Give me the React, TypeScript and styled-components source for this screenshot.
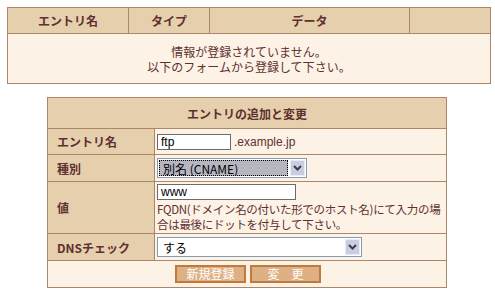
import styled, { createGlobalStyle } from "styled-components";

const GlobalStyle = createGlobalStyle`
  body {
    margin: 0;
    background: #ffffff;
    font-family: "Noto Sans CJK JP", "Liberation Sans", sans-serif;
    font-size: 12px;
    color: #5e3030;
  }
`;

const Page = styled.div`
  padding: 7px;
`;

const ListTable = styled.table`
  width: 480px;
  border-collapse: collapse;
  table-layout: fixed;
`;

const HeadCell = styled.th<{ $w: number }>`
  width: ${(p) => p.$w}px;
  height: 25px;
  padding: 0;
  background: #e6cfad;
  border: 1px solid #ad8568;
  font-weight: bold;
  font-size: 12px;
  color: #5e3030;
`;

const EmptyCell = styled.td`
  height: 49px;
  padding: 0;
  background: #fdf2e6;
  border: 1px solid #ad8568;
  text-align: center;
  line-height: 15px;
`;

const FormTable = styled.table`
  width: 400px;
  margin: 13px 0 0 40px;
  border-collapse: collapse;
  table-layout: fixed;
`;

const Col = styled.col<{ $w?: number }>`
  width: ${(p) => (p.$w ? `${p.$w}px` : "auto")};
`;

const Title = styled.th`
  height: 30px;
  padding: 0;
  background: #e6cfad;
  border: 1px solid #ad8568;
  font-weight: bold;
  text-align: center;
`;

const Label = styled.th<{ $h: number }>`
  height: ${(p) => p.$h}px;
  padding: 0 0 0 9px;
  background: #e6cfad;
  border: 1px solid #ad8568;
  font-weight: bold;
  text-align: left;
`;

const Value = styled.td`
  padding: 0 0 0 2px;
  background: #fdf2e6;
  border: 1px solid #ad8568;
`;

const Line = styled.div`
  display: flex;
  align-items: center;
  gap: 3px;
`;

const Field = styled.div<{ $w: number }>`
  box-sizing: border-box;
  width: ${(p) => p.$w}px;
  height: 16px;
  padding: 0 3px;
  background: #ffffff;
  border: 1px solid #6b6b6b;
  color: #000000;
  font-family: "Liberation Sans", sans-serif;
  font-size: 12px;
  line-height: 14px;
`;

const Domain = styled.span`
  font-family: "Liberation Sans", sans-serif;
  color: #5e3030;
`;

const SelectBox = styled.div<{ $w: number }>`
  box-sizing: border-box;
  width: ${(p) => p.$w}px;
  height: 20px;
  display: flex;
  align-items: center;
  padding: 1px;
  background: #ffffff;
  border: 1px solid #7f9db9;
  color: #000000;
`;

const SelectText = styled.div<{ $focus?: boolean }>`
  flex: 1;
  height: 16px;
  box-sizing: border-box;
  padding: 0 3px;
  line-height: 15px;
  background: ${(p) => (p.$focus ? "#b5b6c0" : "transparent")};
  border: 1px dotted ${(p) => (p.$focus ? "#000000" : "transparent")};
`;

const ArrowButton = styled.div`
  width: 15px;
  height: 16px;
  margin-left: 2px;
  box-sizing: border-box;
  display: flex;
  align-items: center;
  justify-content: center;
  background: #c9cde2;
  border: 1px solid #e8eaf4;
`;

const Hint = styled.div`
  margin-top: 2px;
  line-height: 15px;
  font-size: 11.5px;
  letter-spacing: -0.3px;
  white-space: nowrap;
`;

const ButtonCell = styled.td`
  height: 26px;
  padding: 0;
  background: #fdf2e6;
  border: 1px solid #ad8568;
  text-align: center;
`;

const Buttons = styled.div`
  display: flex;
  justify-content: center;
  gap: 4px;
  padding-left: 2px;
`;

const Button = styled.button`
  width: 71px;
  height: 18px;
  padding: 0;
  background: #deb184;
  border: 2px solid #c27a3c;
  color: #ffffff;
  font-family: "Noto Sans CJK JP", sans-serif;
  font-size: 12px;
  line-height: 12px;
`;

const Chevron = () => (
  <svg width="9" height="6" viewBox="0 0 9 6">
    <path d="M1 1 L4.5 4.5 L8 1" stroke="#3c3c3c" strokeWidth="2" fill="none" />
  </svg>
);

export default function App() {
  return (
    <Page>
      <GlobalStyle />
      <ListTable>
        <thead>
          <tr>
            <HeadCell $w={120}>エントリ名</HeadCell>
            <HeadCell $w={80}>タイプ</HeadCell>
            <HeadCell $w={199}>データ</HeadCell>
            <HeadCell $w={80}></HeadCell>
          </tr>
        </thead>
        <tbody>
          <tr>
            <EmptyCell colSpan={4}>
              情報が登録されていません。
              <br />
              以下のフォームから登録して下さい。
            </EmptyCell>
          </tr>
        </tbody>
      </ListTable>

      <FormTable>
        <colgroup>
          <Col $w={107} />
          <Col />
        </colgroup>
        <tbody>
          <tr>
            <Title colSpan={2}>エントリの追加と変更</Title>
          </tr>
          <tr>
            <Label $h={25}>エントリ名</Label>
            <Value>
              <Line>
                <Field $w={74}>ftp</Field>
                <Domain>.example.jp</Domain>
              </Line>
            </Value>
          </tr>
          <tr>
            <Label $h={26}>種別</Label>
            <Value>
              <SelectBox $w={150}>
                <SelectText $focus>別名 (CNAME)</SelectText>
                <ArrowButton>
                  <Chevron />
                </ArrowButton>
              </SelectBox>
            </Value>
          </tr>
          <tr>
            <Label $h={51}>値</Label>
            <Value>
              <Field $w={139}>www</Field>
              <Hint>
                FQDN(ドメイン名の付いた形でのホスト名)にて入力の場
                <br />
                合は最後にドットを付与して下さい。
              </Hint>
            </Value>
          </tr>
          <tr>
            <Label $h={26}>DNSチェック</Label>
            <Value>
              <SelectBox $w={205}>
                <SelectText>する</SelectText>
                <ArrowButton>
                  <Chevron />
                </ArrowButton>
              </SelectBox>
            </Value>
          </tr>
          <tr>
            <ButtonCell colSpan={2}>
              <Buttons>
                <Button>新規登録</Button>
                <Button>変　更</Button>
              </Buttons>
            </ButtonCell>
          </tr>
        </tbody>
      </FormTable>
    </Page>
  );
}
